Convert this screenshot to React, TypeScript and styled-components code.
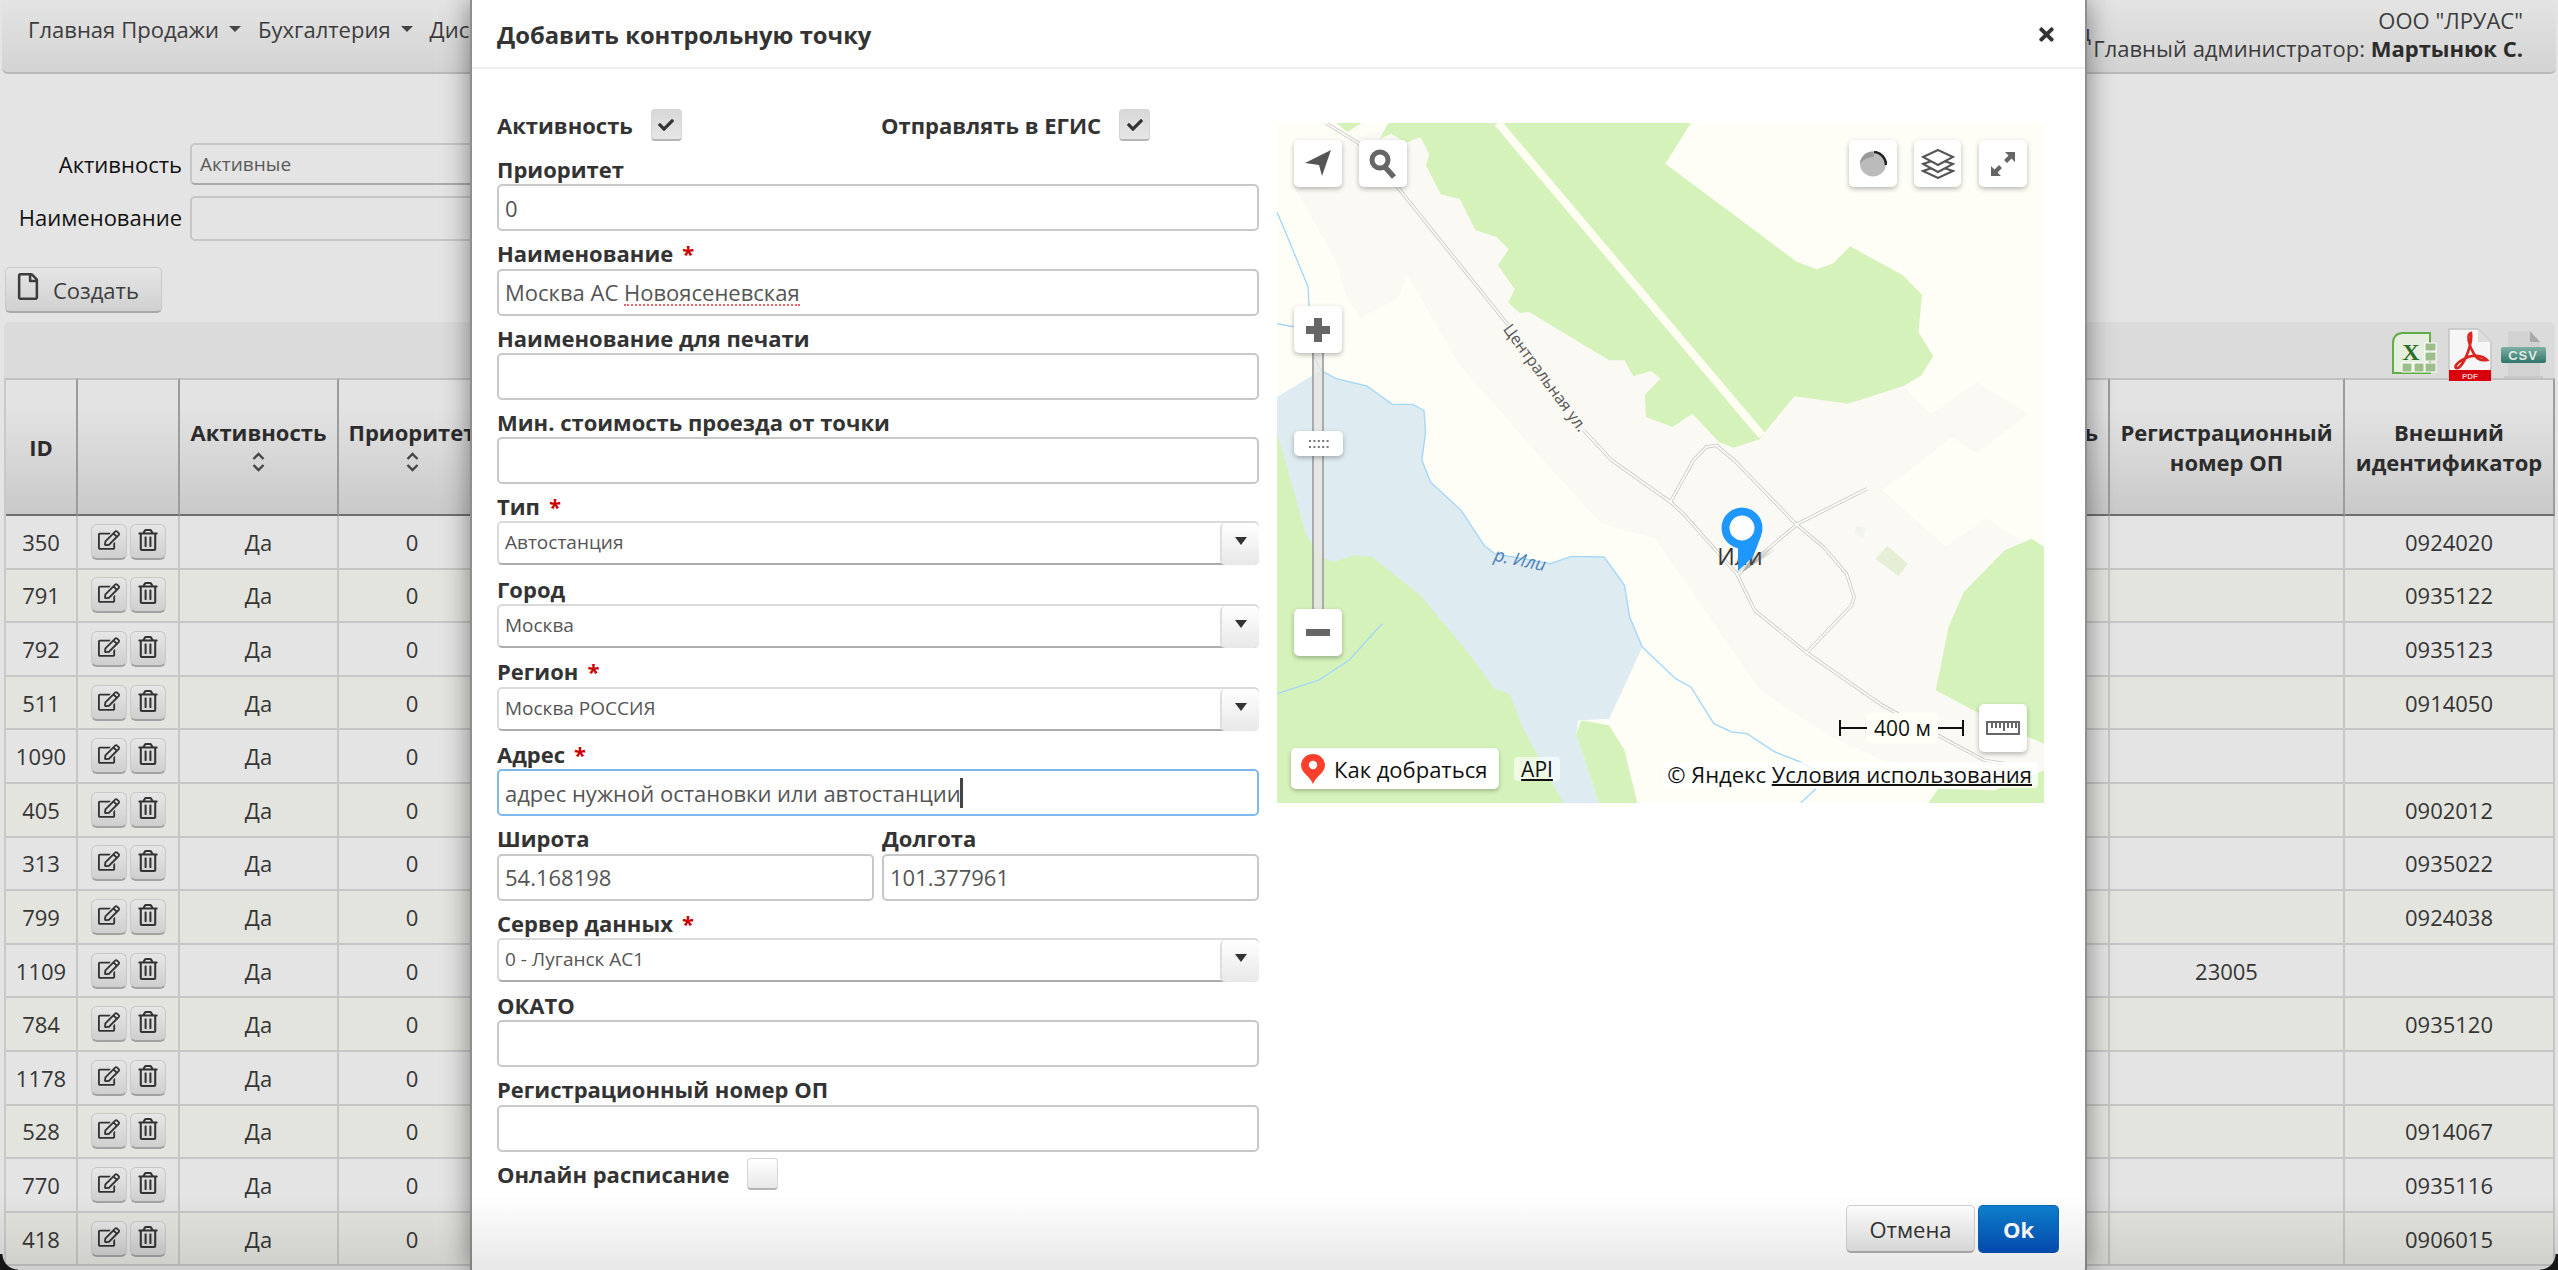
import React from "react";
import styled, { createGlobalStyle } from "styled-components";
import { FaCheck, FaRegEdit, FaRegFile, FaRegTrashAlt, FaTimes } from "react-icons/fa";

const rows = [
  { id: 350, ext: "0924020" },
  { id: 791, ext: "0935122" },
  { id: 792, ext: "0935123" },
  { id: 511, ext: "0914050" },
  { id: 1090, ext: "" },
  { id: 405, ext: "0902012" },
  { id: 313, ext: "0935022" },
  { id: 799, ext: "0924038" },
  { id: 1109, ext: "", reg: "23005" },
  { id: 784, ext: "0935120" },
  { id: 1178, ext: "" },
  { id: 528, ext: "0914067" },
  { id: 770, ext: "0935116" },
  { id: 418, ext: "0906015" },
];

const GlobalStyle = createGlobalStyle`
  html, body {
    margin: 0;
    height: 100%;
    overflow: hidden;
    background: #e4e4e4;
  }
  body {
    font-family: "Open Sans", "Noto Sans", sans-serif;
    font-size: 22px;
    color: #333;
  }
  * { box-sizing: border-box; }
`;

const Page = styled.div`
  position: relative;
  width: 2558px;
  height: 1270px;
  overflow: hidden;
  background: #e4e4e4;
`;

/* ---------- page behind the dialog ---------- */

const Navbar = styled.header`
  display: flex;
  height: 74px;
  margin: 0 2px;
  padding-left: 26px;
  border-bottom: 2px solid #b9b9b9;
  border-radius: 0 0 6px 6px;
  background: linear-gradient(#e4e4e4, #d3d3d3);
`;

const Menu = styled.nav`
  display: flex;
  flex: 1;
  gap: 6px;
  padding-top: 14px;
  line-height: 30px;
  color: #3c3c3c;
`;

const MenuItem = styled.span<{ $push?: boolean }>`
  display: flex;
  align-items: center;
  height: 30px;
  gap: 10px;
  white-space: nowrap;
  margin-left: ${({ $push }) => ($push ? "auto" : "0")};
  padding-top: ${({ $push }) => ($push ? "6px" : "0")};
`;

const Caret = styled.i`
  width: 0;
  height: 0;
  margin-right: 11px;
  border-left: 6px solid transparent;
  border-right: 6px solid transparent;
  border-top: 6px solid #444;
`;

const Account = styled.div`
  width: 431px;
  margin: 6px 33px 0 1px;
  text-align: right;
  line-height: 28px;
  color: #3c3c3c;
  white-space: nowrap;
  b { color: #2c2c2c; }
`;

const FilterForm = styled.form`
  display: grid;
  grid-template-columns: 180px 900px;
  grid-auto-rows: 42px;
  row-gap: 11px;
  column-gap: 8px;
  margin: 0;
  padding: 69px 0 0 2px;
`;

const FilterLabel = styled.label`
  align-self: center;
  text-align: right;
  color: #111;
`;

const FilterBox = styled.div<{ $tall?: boolean }>`
  display: flex;
  align-items: center;
  height: ${({ $tall }) => ($tall ? "45px" : "42px")};
  padding-left: 8px;
  border: 2px solid #c6c6c6;
  border-bottom-color: ${({ $tall }) => ($tall ? "#c6c6c6" : "#aaa")};
  border-radius: 5px;
  font-size: 19px;
  color: #5a5a5a;
  background: #e4e4e4;
`;

const CreateButton = styled.button`
  display: flex;
  align-items: center;
  gap: 14px;
  width: 157px;
  height: 46px;
  margin: 29px 0 9px 5px;
  padding: 0 0 0 11px;
  border: 1px solid #c9c9c9;
  border-bottom: 2px solid #aaa;
  border-radius: 5px;
  background: linear-gradient(#e6e6e6, #d0d0d0);
  font: inherit;
  color: #3d3d3d;
  svg { width: 22px; height: 27px; margin-top: -6px; }
`;

const Panel = styled.section`
  margin: 0 3px 0 4px;
`;

const PanelBar = styled.div`
  display: flex;
  justify-content: flex-end;
  align-items: flex-end;
  gap: 9px;
  height: 56px;
  padding: 0 9px 0 0;
  border-radius: 6px 6px 0 0;
  background: #dbdbdb;
  svg:nth-child(1) { margin-right: 2px; }
  svg:nth-child(2) { margin-bottom: -3px; }
`;

const Table = styled.table`
  width: 2551px;
  table-layout: fixed;
  border-collapse: separate;
  border-spacing: 0;
  border-left: 2px solid #c9c9c9;
`;

const HeadCell = styled.th<{ $trailing?: boolean }>`
  height: 138px;
  padding: ${({ $trailing }) => ($trailing ? "0 10px 0 4px" : "0 4px")};
  border-top: 2px solid #c0c0c0;
  border-right: 2px solid #9c9c9c;
  border-bottom: 2px solid #6f6f6f;
  background: linear-gradient(#e3e3e3 20%, #c9c9c9);
  line-height: 30px;
  font-weight: 700;
  color: #2c2c2c;
  text-align: ${({ $trailing }) => ($trailing ? "right" : "center")};
  white-space: nowrap;
  vertical-align: middle;
  overflow: hidden;
`;

const SortIcon = styled.svg`
  display: block;
  width: 13px;
  height: 20px;
  margin: 5px auto 6px;
`;

const Row = styled.tr<{ $even: boolean }>`
  height: 53.6px;
  background: ${({ $even }) => ($even ? "#e3e4de" : "#e4e4e4")};
`;

const Cell = styled.td`
  padding: 0;
  border-right: 2px solid #c6c6c6;
  border-bottom: 2px solid #c6c6c6;
  text-align: center;
  line-height: 30px;
  color: #353535;
`;

const RowActions = styled.div`
  display: flex;
  justify-content: center;
  gap: 3px;
`;

const RowButton = styled.button`
  display: flex;
  justify-content: center;
  width: 36px;
  height: 36px;
  padding: 4px 0 0;
  border: 1px solid #c8c8c8;
  border-bottom: 2px solid #a2a2a2;
  border-radius: 6px;
  background: linear-gradient(#e6e6e6, #cfcfcf);
  color: #333;
  svg { width: 22px; height: 22px; }
`;

const Corner = styled.div<{ $right?: boolean }>`
  position: absolute;
  bottom: 0;
  width: 18px;
  height: 16px;
  ${({ $right }) => ($right ? "right: 0;" : "left: 0;")}
  background: radial-gradient(
    circle at ${({ $right }) => ($right ? "0 0" : "100% 0")},
    transparent 15px,
    #151515 16px
  );
`;

const BottomFade = styled.div`
  position: absolute;
  left: 0;
  right: 0;
  bottom: 0;
  height: 76px;
  background: linear-gradient(rgba(0, 0, 0, 0), rgba(0, 0, 0, 0.09));
  pointer-events: none;
`;

/* ---------- dialog ---------- */

const Modal = styled.section`
  position: absolute;
  left: 470px;
  top: 0;
  display: flex;
  flex-direction: column;
  width: 1617px;
  height: 1270px;
  border-left: 2px solid #8e8e8e;
  border-right: 2px solid #8e8e8e;
  background: #fff;
  box-shadow: 0 0 26px rgba(0, 0, 0, 0.45);
`;

const ModalHeader = styled.div`
  display: flex;
  justify-content: space-between;
  align-items: center;
  flex: none;
  height: 69px;
  padding: 2px 28px 0 25px;
  border-bottom: 2px solid #eee;
`;

const ModalTitle = styled.h3`
  margin: 0;
  font-size: 23.8px;
  font-weight: 700;
  color: #333;
`;

const CloseIcon = styled(FaTimes)`
  width: 21px;
  height: 21px;
  color: #333;
`;

const ModalBody = styled.div`
  display: flex;
  flex: 1;
  gap: 18px;
  padding: 40px 0 0 25px;
`;

const FormColumn = styled.div`
  width: 762px;
  flex: none;
`;

const CheckRow = styled.div`
  display: grid;
  grid-template-columns: 384px 1fr;
  height: 32px;
`;

const CheckField = styled.div`
  display: flex;
  align-items: center;
  gap: 18px;
`;

const Label = styled.label`
  display: block;
  height: 37.3px;
  padding-top: 9px;
  line-height: 26px;
  font-weight: 700;
  color: #333;
  white-space: nowrap;
`;

const InlineLabel = styled(Label)`
  height: auto;
  padding: 0;
`;

const Required = styled.span`
  margin-left: 9px;
  color: #c00;
`;

const Checkbox = styled.span<{ $checked?: boolean }>`
  display: flex;
  align-items: center;
  justify-content: center;
  width: 31px;
  height: 32px;
  border: 1px solid #d6d6d6;
  border-bottom: 2px solid #b5b5b5;
  border-radius: 4px;
  background: ${({ $checked }) =>
    $checked ? "linear-gradient(#d8d8d8, #e6e6e6)" : "linear-gradient(#fff, #e8e8e8)"};
  color: #333;
  svg { width: 16px; height: 16px; }
`;

const Spacer = styled.div`
  height: 6px;
`;

const TextBox = styled.div<{ $focused?: boolean }>`
  display: flex;
  align-items: center;
  height: 47px;
  padding: 0 6px;
  border: 2px solid ${({ $focused }) => ($focused ? "#7db9ee" : "#c8c8c8")};
  border-radius: 5px;
  line-height: 30px;
  color: #555;
  white-space: pre;
`;

const Misspelled = styled.span`
  border-bottom: 2px dotted #f0646e;
  line-height: 23px;
  margin-top: 3px;
`;

const TextCaret = styled.i`
  width: 3px;
  height: 30px;
  margin-left: -1px;
  background: #444;
`;

const SelectBox = styled.div`
  display: flex;
  justify-content: space-between;
  align-items: stretch;
  height: 44px;
  margin-bottom: 1.3px;
  padding-left: 6px;
  border: 2px solid #dadada;
  border-bottom-color: #adadad;
  border-radius: 5px;
  font-size: 19px;
  line-height: 38px;
  color: #555;
  background: #fff;
`;

const SelectArrow = styled.span`
  display: flex;
  align-items: center;
  justify-content: center;
  width: 39px;
  margin: 0 -2px -2px 0;
  padding-bottom: 6px;
  border-left: 2px solid #dedede;
  border-radius: 5px;
  background: linear-gradient(#fff, #e8e8e8);
  &::before {
    content: "";
    border-left: 6px solid transparent;
    border-right: 6px solid transparent;
    border-top: 8px solid #333;
  }
`;

const CoordRow = styled.div`
  display: grid;
  grid-template-columns: 377px 377px;
  gap: 8px;
`;

const ModalFooter = styled.div`
  display: flex;
  justify-content: flex-end;
  gap: 3px;
  flex: none;
  height: 65px;
  padding-right: 26px;
`;

const FooterButton = styled.button<{ $primary?: boolean }>`
  height: 48px;
  width: ${({ $primary }) => ($primary ? "81px" : "129px")};
  border: 1px solid ${({ $primary }) => ($primary ? "#0b62c0" : "#d2d2d2")};
  border-bottom: 2px solid ${({ $primary }) => ($primary ? "#0450b8" : "#b0b0b0")};
  border-radius: 5px;
  background: ${({ $primary }) =>
    $primary ? "linear-gradient(#0d80cc, #0450ba)" : "linear-gradient(#fff, #e6e6e6)"};
  font: inherit;
  font-weight: ${({ $primary }) => ($primary ? 700 : 400)};
  color: ${({ $primary }) => ($primary ? "#fff" : "#333")};
`;

/* ---------- map ---------- */

const MapFrame = styled.div`
  position: relative;
  flex: none;
  width: 767px;
  height: 680px;
  margin-top: 14px;
  overflow: hidden;
  background: #fefef7;
`;

const MapArt = styled.svg`
  display: block;
  width: 767px;
  height: 680px;
`;

const MapControl = styled.div<{ $x: number; $y: number; $w?: number; $h?: number }>`
  position: absolute;
  left: ${({ $x }) => $x}px;
  top: ${({ $y }) => $y}px;
  display: flex;
  align-items: center;
  justify-content: center;
  width: ${({ $w }) => $w ?? 48}px;
  height: ${({ $h }) => $h ?? 47}px;
  border-radius: 5px;
  background: #fff;
  box-shadow: 0 2px 5px rgba(0, 0, 0, 0.28);
`;

const ZoomTrack = styled.div`
  position: absolute;
  left: 35px;
  top: 230px;
  width: 12px;
  height: 256px;
  border-left: 2px solid #aaa;
  border-right: 2px solid #aaa;
  background: rgba(230, 230, 225, 0.75);
`;

const MapText = styled.span<{ $x: number; $y: number; $angle?: number; $size?: number; $color?: string; $bg?: string }>`
  position: absolute;
  left: ${({ $x }) => $x}px;
  top: ${({ $y }) => $y}px;
  transform: translate(-50%, -50%) rotate(${({ $angle }) => $angle ?? 0}deg);
  font-size: ${({ $size }) => $size ?? 16}px;
  line-height: 1.1;
  color: ${({ $color }) => $color ?? "#555"};
  background: ${({ $bg }) => $bg ?? "transparent"};
  white-space: nowrap;
`;

const RouteButton = styled.div`
  position: absolute;
  left: 14px;
  top: 625px;
  display: flex;
  align-items: center;
  gap: 9px;
  width: 208px;
  height: 41px;
  padding-left: 10px;
  border-radius: 5px;
  background: #fff;
  box-shadow: 0 2px 4px rgba(0, 0, 0, 0.25);
  font-size: 22px;
  color: #111;
`;

const ApiLink = styled.span`
  position: absolute;
  left: 237px;
  top: 634px;
  width: 46px;
  height: 24px;
  border-radius: 4px;
  background: rgba(255, 255, 255, 0.6);
  text-align: center;
  font-size: 21px;
  line-height: 24px;
  color: #111;
  text-decoration: underline;
`;

const ScaleLine = styled.div`
  position: absolute;
  left: 562px;
  top: 597px;
  display: flex;
  align-items: center;
  justify-content: space-between;
  width: 125px;
  height: 16px;
  border-left: 2px solid #111;
  border-right: 2px solid #111;
  &::before {
    content: "";
    position: absolute;
    left: 0;
    right: 0;
    top: 7px;
    height: 2px;
    background: #111;
  }
`;

const ScaleText = styled.span`
  position: absolute;
  left: 26px;
  top: -7px;
  width: 71px;
  height: 30px;
  border-radius: 4px;
  background: #fefef7;
  text-align: center;
  font-size: 21px;
  line-height: 30px;
  color: #111;
`;

const Copyright = styled.div`
  position: absolute;
  right: 6px;
  top: 639px;
  height: 26px;
  padding: 0 6px 0 4px;
  border-radius: 4px;
  background: rgba(255, 255, 255, 0.75);
  font-size: 22px;
  line-height: 25px;
  color: #111;
  white-space: nowrap;
  u { text-decoration-thickness: 2px; }
`;

const PinArt = styled.svg`
  position: absolute;
  left: 440px;
  top: 380px;
  width: 60px;
  height: 72px;
`;

const MapDrawing = () => (
  <MapArt viewBox="14 38 1503 2040" preserveAspectRatio="none">
    <polygon
      fill="#faf9f3"
      points="48,232 130,450 150,560 178,625 253,562 268,490 370,760 535,1050 650,1240 755,1285 960,1740 1100,1880 1290,2010 1440,2040 1517,2000 1517,1300 1470,1290 1405,1222 1325,1308 1200,1140 1280,1050 1335,980 1385,1030 1487,910 1385,815 1295,910 1240,826 1000,800 300,80 230,60 100,100"
    />
    <polygon
      fill="#deebf1"
      points="14,860 100,780 130,805 190,827 240,882 280,882 302,900 305,965 298,1050 315,1115 375,1200 420,1305 440,1330 550,1360 590,1338 655,1340 695,1425 705,1520 730,1610 665,1825 605,1830 600,1870 645,2078 14,2078"
    />
    <g fill="#d5f2bb">
      <polygon points="14,970 30,1050 70,1270 100,1340 125,1355 165,1335 200,1340 295,1455 390,1630 440,1735 470,1750 495,1850 575,2078 14,2078" />
      <polygon points="610,1830 665,1845 695,1920 720,2078 645,2078 600,1870" />
      <polygon points="130,38 180,38 152,65" />
      <polygon points="232,38 825,38 775,160 1033,455 1072,477 1104,459 1137,408 1240,494 1278,553 1271,665 1300,738 1277,795 1243,826 1133,880 1028,858 958,988 908,1012 880,995 828,910 789,950 737,920 735,853 765,805 748,782 712,797 695,750 665,750 508,605 490,608 467,577 480,537 447,465 468,417 444,380 403,360 372,266 335,252 306,165 312,130 295,80 268,97 238,70 215,85" />
      <polygon points="1517,1310 1493,1285 1440,1320 1360,1445 1330,1550 1305,1740 1440,1850 1517,1900" />
      <polygon points="1290,2078 1310,2035 1420,2040 1517,1980 1517,2078" />
    </g>
    <polygon fill="#e4efd6" points="1210,1307 1250,1360 1232,1398 1187,1345" />
    <polygon fill="#f3f3ee" points="1150,1247 1168,1254 1163,1280 1145,1272" />
    <line x1="447" y1="38" x2="964" y2="975" stroke="#fdfdf2" strokeWidth="8" vectorEffect="non-scaling-stroke" />
    <g fill="none" stroke="#a6d8f6" strokeWidth="1.4">
      <polyline vectorEffect="non-scaling-stroke" points="14,305 40,400 75,530 77,590" />
      <polyline vectorEffect="non-scaling-stroke" points="14,640 50,650" />
      <polyline
        vectorEffect="non-scaling-stroke"
        points="85,735 100,780 130,805 190,827 240,882 280,882 302,900 305,965 298,1050 315,1115 375,1200 420,1305 440,1330 550,1360 590,1338 655,1340 695,1425 705,1520 730,1610 795,1705 825,1730 870,1840 905,1865 935,1870 990,1925 1040,1955 1075,1985"
      />
      <polyline vectorEffect="non-scaling-stroke" points="1070,2035 1040,2078" />
      <polyline vectorEffect="non-scaling-stroke" points="14,1750 95,1710 155,1650 220,1540" />
    </g>
    {["#cbcbc6", "#ffffff"].map((color, i) => (
      <g key={color} fill="none" stroke={color} strokeWidth={i ? 1.6 : 3.4} strokeLinejoin="round">
        <polyline vectorEffect="non-scaling-stroke" points="110,38 175,100 250,230 470,650" />
        <polyline
          vectorEffect="non-scaling-stroke"
          points="615,960 670,1050 785,1175 810,1210 915,1390 950,1500 1050,1625 1200,1785 1400,1950 1440,1960"
        />
        <polyline vectorEffect="non-scaling-stroke" points="785,1175 830,1050 855,1010 875,1005 910,1050 1030,1240 1085,1310 1130,1390 1145,1460 1140,1485 1050,1630" />
        <polyline vectorEffect="non-scaling-stroke" points="1170,1135 1035,1240 915,1395" />
      </g>
    ))}
  </MapArt>
);

const gray = "#666";

const LocateIcon = () => (
  <svg width="28" height="28" viewBox="0 0 28 28">
    <polygon fill="#555" points="1,13 27,0 18,26 15,15" />
  </svg>
);

const SearchIcon = () => (
  <svg width="28" height="30" viewBox="0 0 28 30">
    <circle cx="11" cy="11" r="8" fill="none" stroke={gray} strokeWidth="5" />
    <line x1="16" y1="18" x2="25" y2="28" stroke={gray} strokeWidth="5.5" />
  </svg>
);

const TrafficIcon = () => (
  <svg width="28" height="26" viewBox="0 0 28 26">
    <ellipse cx="14" cy="13" rx="13" ry="12.5" fill="#bbb" />
    <path d="M1 13 A13 12.5 0 0 1 14 0.5 L15 6 Q6 6 1 13Z" fill="#999" />
    <path d="M15 1 C22 1.5 27 7 27 14" fill="none" stroke="#222" strokeWidth="2.6" />
  </svg>
);

const LayersIcon = () => (
  <svg width="34" height="30" viewBox="0 0 34 30" fill="#fff" stroke="#555" strokeWidth="2">
    <polygon points="17,17 2,22 17,29 32,22" />
    <polygon points="17,10 2,15 17,23 32,15" />
    <polygon points="17,1 2,8 17,16 32,8" />
  </svg>
);

const ExpandIcon = () => (
  <svg width="26" height="26" viewBox="0 0 26 26" fill={gray}>
    <polygon points="15,1 25,1 25,11 21.5,7.5 17,12 14,9 18.5,4.5" />
    <polygon points="1,15 1,25 11,25 7.5,21.5 12,17 9,14 4.5,18.5" />
  </svg>
);

const PlusIcon = () => (
  <svg width="24" height="24" viewBox="0 0 24 24" fill={gray}>
    <rect x="8" y="0" width="8" height="24" />
    <rect x="0" y="8" width="24" height="8" />
  </svg>
);

const MinusIcon = () => (
  <svg width="24" height="7" viewBox="0 0 24 7" fill={gray}>
    <rect width="24" height="7" />
  </svg>
);

const GripIcon = () => (
  <svg width="20" height="8" viewBox="0 0 20 8" fill="#777">
    {[0, 1, 2, 3, 4].map((i) => (
      <g key={i}>
        <rect x={i * 4.4} y="0" width="2" height="2" />
        <rect x={i * 4.4} y="6" width="2" height="2" />
      </g>
    ))}
  </svg>
);

const RulerIcon = () => (
  <svg width="34" height="14" viewBox="0 0 34 14">
    <rect x="1" y="1" width="32" height="12" fill="#fff" stroke="#666" strokeWidth="2" />
    {[6, 10, 14, 18, 22, 26, 30].map((x, i) => (
      <rect key={x} x={x - 1} y="2" width="2" height={i === 3 ? 8 : 5} fill="#666" />
    ))}
  </svg>
);

const RouteMarker = () => (
  <svg width="24" height="30" viewBox="0 0 24 30">
    <path d="M12 30 C9 22 0 19 0 11 A12 11 0 0 1 24 11 C24 19 15 22 12 30Z" fill="#fc3f2d" />
    <circle cx="12" cy="11" r="4.2" fill="#fff" />
  </svg>
);

const Pin = () => (
  <PinArt viewBox="0 0 60 72">
    <defs>
      <linearGradient id="pinShadow" x1="0" y1="1" x2="1" y2="0">
        <stop offset="0" stopColor="#555" stopOpacity="0.55" />
        <stop offset="1" stopColor="#777" stopOpacity="0" />
      </linearGradient>
    </defs>
    <polygon points="35,55 55,43 58,48 25,69" fill="url(#pinShadow)" />
    <path d="M44 33 L36 54 L21 68 L21 40Z" fill="#1e98ff" />
    <circle cx="25" cy="25" r="16.5" fill="#fff" stroke="#1e98ff" strokeWidth="8" />
  </PinArt>
);

const SortGlyph = () => (
  <SortIcon viewBox="0 0 13 20" fill="none" stroke="#444" strokeWidth="2.4">
    <polyline points="1.5,7 6.5,2 11.5,7" />
    <polyline points="1.5,13 6.5,18 11.5,13" />
  </SortIcon>
);

const ExcelIcon = () => (
  <svg width="47" height="47" viewBox="0 0 47 47">
    <path d="M12 2 H40 V42 H3 V12 Q3 3 12 2Z" fill="#e6efdf" stroke="#62ad47" strokeWidth="2" />
    <g fill="#9dbe8b" stroke="#fff" strokeWidth="1">
      <rect x="12" y="32" width="10" height="9" />
      <rect x="24" y="32" width="10" height="9" />
      <rect x="35" y="32" width="11" height="9" />
      <rect x="35" y="21" width="11" height="9" />
      <rect x="35" y="12" width="11" height="8" />
    </g>
    <text x="21" y="29" textAnchor="middle" fontFamily="Liberation Serif, serif" fontWeight="700" fontSize="24" fill="#2e6e2a">
      X
    </text>
  </svg>
);

const PdfIcon = () => (
  <svg width="44" height="53" viewBox="0 0 44 53">
    <path d="M1 1 H30 L43 14 V52 H1Z" fill="#f6f6f6" stroke="#c4c4c4" strokeWidth="1.5" />
    <path d="M30 1 L43 14 H30Z" fill="#ddd" />
    <path
      d="M23 5 C18 6 21 18 26 26 C29 31 34 33 39 32 C34 27 24 26 16 31 C10 34 6 38 8 40 C12 41 17 32 20 24 C22 18 24 10 23 5Z"
      fill="none"
      stroke="#d9251d"
      strokeWidth="2.6"
    />
    <rect x="1" y="42" width="42" height="11" fill="#d8000c" />
    <text x="22" y="51" textAnchor="middle" fontFamily="Liberation Sans, sans-serif" fontWeight="700" fontSize="8" fill="#f8c0c0">
      PDF
    </text>
  </svg>
);

const CsvIcon = () => (
  <svg width="45" height="47" viewBox="0 0 45 47">
    <defs>
      <linearGradient id="csvBand" x1="0" y1="0" x2="0" y2="1">
        <stop offset="0" stopColor="#7fb0a4" />
        <stop offset="1" stopColor="#2f7668" />
      </linearGradient>
    </defs>
    <path d="M7 0 H29 L39 11 V45 H7Z" fill="#d2d2d2" />
    <path d="M29 0 L39 11 H29Z" fill="#a8a8a8" />
    <rect x="0" y="16" width="45" height="16" rx="2" fill="url(#csvBand)" />
    <text x="22" y="28.5" textAnchor="middle" fontFamily="Liberation Sans, sans-serif" fontWeight="700" fontSize="13" letterSpacing="1" fill="#dfe9e6">
      CSV
    </text>
    <rect x="3" y="45" width="39" height="2" fill="#c9c9c9" />
  </svg>
);

function Field({ label, required, children }: { label: string; required?: boolean; children: React.ReactNode }) {
  return (
    <div>
      <Label>
        {label}
        {required && <Required>*</Required>}
      </Label>
      {children}
    </div>
  );
}

function Select({ value }: { value: string }) {
  return (
    <SelectBox>
      {value}
      <SelectArrow />
    </SelectBox>
  );
}

export default function App() {
  return (
    <Page>
      <GlobalStyle />
      <Navbar>
        <Menu>
          <MenuItem>Главная</MenuItem>
          <MenuItem>
            Продажи
            <Caret />
          </MenuItem>
          <MenuItem>
            Бухгалтерия
            <Caret />
          </MenuItem>
          <MenuItem>
            Диспетчеризация
            <Caret />
          </MenuItem>
          <MenuItem $push>Выход</MenuItem>
        </Menu>
        <Account>
          ООО "ЛРУАС"
          <br />
          Главный администратор: <b>Мартынюк С.</b>
        </Account>
      </Navbar>

      <FilterForm>
        <FilterLabel>Активность</FilterLabel>
        <FilterBox>Активные</FilterBox>
        <FilterLabel>Наименование</FilterLabel>
        <FilterBox $tall />
      </FilterForm>

      <CreateButton type="button">
        <FaRegFile />
        Создать
      </CreateButton>

      <Panel>
        <PanelBar>
          <ExcelIcon />
          <PdfIcon />
          <CsvIcon />
        </PanelBar>
        <Table>
          <colgroup>
            <col width="72" />
            <col width="102" />
            <col width="159" />
            <col width="148" />
            <col />
            <col width="235" />
            <col width="210" />
          </colgroup>
          <thead>
            <tr>
              <HeadCell>ID</HeadCell>
              <HeadCell />
              <HeadCell>
                Активность
                <SortGlyph />
              </HeadCell>
              <HeadCell>
                Приоритет
                <SortGlyph />
              </HeadCell>
              <HeadCell $trailing>
                Мин. стоимость
                <SortGlyph />
              </HeadCell>
              <HeadCell>
                Регистрационный
                <br />
                номер ОП
              </HeadCell>
              <HeadCell>
                Внешний
                <br />
                идентификатор
              </HeadCell>
            </tr>
          </thead>
          <tbody>
            {rows.map((row, i) => (
              <Row key={row.id} $even={i % 2 === 1}>
                <Cell>{row.id}</Cell>
                <Cell>
                  <RowActions>
                    <RowButton type="button">
                      <FaRegEdit />
                    </RowButton>
                    <RowButton type="button">
                      <FaRegTrashAlt />
                    </RowButton>
                  </RowActions>
                </Cell>
                <Cell>Да</Cell>
                <Cell>0</Cell>
                <Cell />
                <Cell>{row.reg}</Cell>
                <Cell>{row.ext}</Cell>
              </Row>
            ))}
          </tbody>
        </Table>
      </Panel>

      <Modal>
        <ModalHeader>
          <ModalTitle>Добавить контрольную точку</ModalTitle>
          <CloseIcon />
        </ModalHeader>
        <ModalBody>
          <FormColumn>
            <CheckRow>
              <CheckField>
                <InlineLabel>Активность</InlineLabel>
                <Checkbox $checked>
                  <FaCheck />
                </Checkbox>
              </CheckField>
              <CheckField>
                <InlineLabel>Отправлять в ЕГИС</InlineLabel>
                <Checkbox $checked>
                  <FaCheck />
                </Checkbox>
              </CheckField>
            </CheckRow>
            <Spacer />
            <Field label="Приоритет">
              <TextBox>0</TextBox>
            </Field>
            <Field label="Наименование" required>
              <TextBox>
                Москва АС <Misspelled>Новоясеневская</Misspelled>
              </TextBox>
            </Field>
            <Field label="Наименование для печати">
              <TextBox />
            </Field>
            <Field label="Мин. стоимость проезда от точки">
              <TextBox />
            </Field>
            <Field label="Тип" required>
              <Select value="Автостанция" />
            </Field>
            <Field label="Город">
              <Select value="Москва" />
            </Field>
            <Field label="Регион" required>
              <Select value="Москва РОССИЯ" />
            </Field>
            <Field label="Адрес" required>
              <TextBox $focused>
                адрес нужной остановки или автостанции
                <TextCaret />
              </TextBox>
            </Field>
            <CoordRow>
              <Field label="Широта">
                <TextBox>54.168198</TextBox>
              </Field>
              <Field label="Долгота">
                <TextBox>101.377961</TextBox>
              </Field>
            </CoordRow>
            <Field label="Сервер данных" required>
              <Select value="0 - Луганск АС1" />
            </Field>
            <Field label="ОКАТО">
              <TextBox />
            </Field>
            <Field label="Регистрационный номер ОП">
              <TextBox />
            </Field>
            <Spacer />
            <CheckField>
              <InlineLabel>Онлайн расписание</InlineLabel>
              <Checkbox />
            </CheckField>
          </FormColumn>

          <MapFrame>
            <MapDrawing />
            <MapText $x={268} $y={255} $angle={53.5} $bg="#faf9f3">
              Центральная ул.
            </MapText>
            <MapText $x={243} $y={437} $angle={12} $size={18} $color="#4d7fb8">
              <i>р. Или</i>
            </MapText>
            <MapText $x={463} $y={434} $size={23} $color="#333">
              Или
            </MapText>
            <Pin />

            <MapControl $x={17} $y={17}>
              <LocateIcon />
            </MapControl>
            <MapControl $x={82} $y={17}>
              <SearchIcon />
            </MapControl>
            <MapControl $x={572} $y={17}>
              <TrafficIcon />
            </MapControl>
            <MapControl $x={637} $y={17} $w={47}>
              <LayersIcon />
            </MapControl>
            <MapControl $x={702} $y={17}>
              <ExpandIcon />
            </MapControl>

            <ZoomTrack />
            <MapControl $x={17} $y={183}>
              <PlusIcon />
            </MapControl>
            <MapControl $x={17} $y={308} $w={49} $h={25}>
              <GripIcon />
            </MapControl>
            <MapControl $x={17} $y={486}>
              <MinusIcon />
            </MapControl>

            <ScaleLine>
              <ScaleText>400 м</ScaleText>
            </ScaleLine>
            <MapControl $x={702} $y={581} $h={48}>
              <RulerIcon />
            </MapControl>

            <RouteButton>
              <RouteMarker />
              Как добраться
            </RouteButton>
            <ApiLink>API</ApiLink>
            <Copyright>
              © Яндекс <u>Условия использования</u>
            </Copyright>
          </MapFrame>
        </ModalBody>
        <ModalFooter>
          <FooterButton type="button">Отмена</FooterButton>
          <FooterButton type="button" $primary>
            Ok
          </FooterButton>
        </ModalFooter>
      </Modal>

      <BottomFade />
      <Corner />
      <Corner $right />
    </Page>
  );
}
